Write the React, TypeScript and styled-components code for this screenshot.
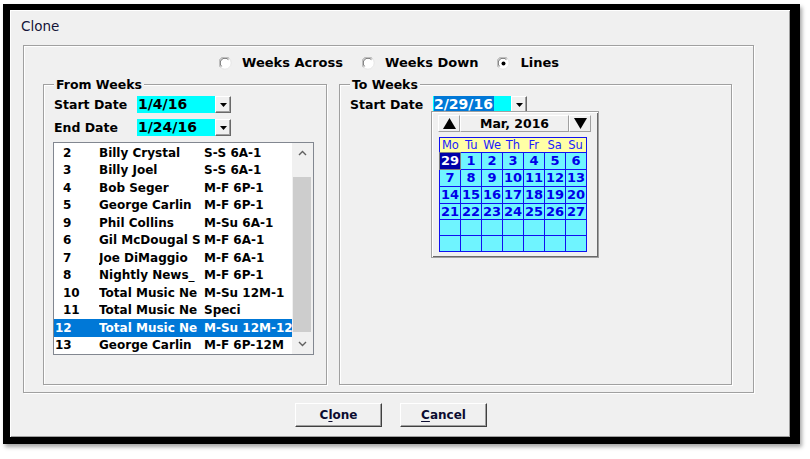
import React from "react";
import styled, { createGlobalStyle } from "styled-components";

const GlobalStyle = createGlobalStyle`
  html, body {
    margin: 0;
    padding: 0;
    background: #ffffff;
  }
  body {
    font-family: "DejaVu Sans", "Noto Sans", sans-serif;
    color: #000;
  }
  * {
    box-sizing: border-box;
  }
`;

interface ListItem {
  n: string;
  name: string;
  sched: string;
  selected?: boolean;
  flush?: boolean;
}

const items: ListItem[] = [
  { n: "2", name: "Billy Crystal", sched: "S-S 6A-1" },
  { n: "3", name: "Billy Joel", sched: "S-S 6A-1" },
  { n: "4", name: "Bob Seger", sched: "M-F 6P-1" },
  { n: "5", name: "George Carlin", sched: "M-F 6P-1" },
  { n: "9", name: "Phil Collins", sched: "M-Su 6A-1" },
  { n: "6", name: "Gil McDougal S", sched: "M-F 6A-1" },
  { n: "7", name: "Joe DiMaggio", sched: "M-F 6A-1" },
  { n: "8", name: "Nightly News_", sched: "M-F 6P-1" },
  { n: "10", name: "Total Music Ne", sched: "M-Su 12M-1" },
  { n: "11", name: "Total Music Ne", sched: "Speci" },
  { n: "12", name: "Total Music Ne", sched: "M-Su 12M-12", selected: true, flush: true },
  { n: "13", name: "George Carlin", sched: "M-F 6P-12M", flush: true },
];

const weekDays = ["Mo", "Tu", "We", "Th", "Fr", "Sa", "Su"];
const weeks: string[][] = [
  ["29", "1", "2", "3", "4", "5", "6"],
  ["7", "8", "9", "10", "11", "12", "13"],
  ["14", "15", "16", "17", "18", "19", "20"],
  ["21", "22", "23", "24", "25", "26", "27"],
  ["", "", "", "", "", "", ""],
  ["", "", "", "", "", "", ""],
];

function Radio({ checked }: { checked?: boolean }) {
  return (
    <svg width="13" height="13" viewBox="0 0 13 13">
      <circle cx="6.5" cy="6.5" r="6" fill="#fff" />
      <path d="M1.6 10.4 A6 6 0 0 1 10.4 1.6" stroke="#a0a0a0" strokeWidth="1" fill="none" />
      <path d="M2.6 9.4 A4.6 4.6 0 0 1 9.4 2.6" stroke="#696969" strokeWidth="1" fill="none" />
      <path d="M10.4 1.6 A6 6 0 0 1 1.6 10.4" stroke="#e3e3e3" strokeWidth="1" fill="none" />
      {checked && <circle cx="6.5" cy="6.5" r="2" fill="#000" />}
    </svg>
  );
}

function DownTriangle() {
  return (
    <svg width="7" height="4" viewBox="0 0 7 4">
      <polygon points="0,0 7,0 3.5,4" fill="#000" />
    </svg>
  );
}

function Chevron({ up }: { up?: boolean }) {
  return (
    <svg width="9" height="6" viewBox="0 0 9 6">
      <polyline
        points={up ? "1,5 4.5,1.5 8,5" : "1,1 4.5,4.5 8,1"}
        stroke="#606060"
        strokeWidth="1.4"
        fill="none"
      />
    </svg>
  );
}

function BigTriangle({ up }: { up?: boolean }) {
  return (
    <svg width="13" height="11" viewBox="0 0 13 11">
      <polygon points={up ? "6.5,0 13,11 0,11" : "0,0 13,0 6.5,11"} fill="#000" />
    </svg>
  );
}

function DatePicker({ value, highlight }: { value: string; highlight?: boolean }) {
  return (
    <DateWrap>
      <DateInput>{highlight ? <Highlight>{value}</Highlight> : value}</DateInput>
      <DropButton>
        <DownTriangle />
      </DropButton>
    </DateWrap>
  );
}

export default function App() {
  return (
    <>
      <GlobalStyle />
      <Page>
        <Frame>
          <Title>Clone</Title>
          <OuterGroup>
            <RadioRow>
              <RadioItem>
                <Radio />
                <span>Weeks Across</span>
              </RadioItem>
              <RadioItem>
                <Radio />
                <span>Weeks Down</span>
              </RadioItem>
              <RadioItem>
                <Radio checked />
                <span>Lines</span>
              </RadioItem>
            </RadioRow>
            <Panels>
              <GroupBox width={284}>
                <Legend>From Weeks</Legend>
                <FieldRow>
                  <FieldLabel>Start Date</FieldLabel>
                  <DatePicker value="1/4/16" />
                </FieldRow>
                <FieldRow>
                  <FieldLabel>End Date</FieldLabel>
                  <DatePicker value="1/24/16" />
                </FieldRow>
                <ListBox>
                  <ListRows>
                    {items.map((it) => (
                      <ListRow key={it.n} selected={it.selected}>
                        <NumCell flush={it.flush}>{it.n}</NumCell>
                        <TextCell>{it.name}</TextCell>
                        <TextCell>{it.sched}</TextCell>
                      </ListRow>
                    ))}
                  </ListRows>
                  <ScrollBar>
                    <ScrollArrow>
                      <Chevron up />
                    </ScrollArrow>
                    <ScrollTrack>
                      <ScrollThumb />
                    </ScrollTrack>
                    <ScrollArrow>
                      <Chevron />
                    </ScrollArrow>
                  </ScrollBar>
                </ListBox>
              </GroupBox>
              <GroupBox width={393}>
                <Legend>To Weeks</Legend>
                <FieldRow>
                  <FieldLabel>Start Date</FieldLabel>
                  <PickerAnchor>
                    <DatePicker value="2/29/16" highlight />
                    <CalendarPopup>
                      <CalHeader>
                        <NavButton>
                          <BigTriangle up />
                        </NavButton>
                        <MonthLabel>Mar, 2016</MonthLabel>
                        <NavButton>
                          <BigTriangle />
                        </NavButton>
                      </CalHeader>
                      <CalGrid>
                        <HeadRow>
                          {weekDays.map((d) => (
                            <DayHead key={d}>{d}</DayHead>
                          ))}
                        </HeadRow>
                        {weeks.flatMap((w, wi) =>
                          w.map((d, di) => (
                            <DayCell key={`${wi}-${di}`} selected={wi === 0 && di === 0}>
                              {d}
                            </DayCell>
                          ))
                        )}
                      </CalGrid>
                    </CalendarPopup>
                  </PickerAnchor>
                </FieldRow>
              </GroupBox>
            </Panels>
          </OuterGroup>
          <ButtonRow>
            <PushButton>
              C<u>l</u>one
            </PushButton>
            <PushButton>
              <u>C</u>ancel
            </PushButton>
          </ButtonRow>
        </Frame>
      </Page>
    </>
  );
}

const Page = styled.div`
  width: 810px;
  height: 459px;
  padding: 4px 0 0 3px;
  background: #fff;
`;

const Frame = styled.div`
  width: 797px;
  height: 440px;
  border-style: solid;
  border-color: #000;
  border-width: 6px 10px 7px 7px;
  background: #f0f0f0;
  box-shadow: 2px 3px 4px rgba(0, 0, 0, 0.35), inset 1px 1px 0 #fff,
    inset -1px -1px 0 #a0a0a0;
  padding: 8px 0 0 11px;
`;

const Title = styled.div`
  font-size: 13.5px;
  line-height: 16px;
  color: #141438;
  height: 16px;
`;

const etched = `
  border: 1px solid #a0a0a0;
  box-shadow: inset 1px 1px 0 #fff, 1px 1px 0 #fff;
`;

const OuterGroup = styled.div`
  ${etched};
  margin: 11px 0 0 2px;
  width: 731px;
  height: 348px;
  padding: 9px 21px 0 19px;
`;

const RadioRow = styled.div`
  display: flex;
  justify-content: center;
  gap: 19px;
  height: 16px;
  padding-left: 3px;
`;

const RadioItem = styled.div`
  display: flex;
  align-items: center;
  gap: 10px;
  font-size: 13px;
  font-weight: bold;
  line-height: 16px;
`;

const Panels = styled.div`
  display: flex;
  gap: 12px;
  margin-top: 13px;
`;

const GroupBox = styled.div<{ width: number }>`
  ${etched};
  position: relative;
  width: ${(p) => p.width}px;
  height: 301px;
  padding: 11px 0 0 9px;
  display: flex;
  flex-direction: column;
  gap: 6px;
`;

const Legend = styled.div`
  position: absolute;
  top: -8px;
  left: 10px;
  padding: 0 2px;
  background: #f0f0f0;
  font-size: 12.5px;
  font-weight: bold;
  line-height: 15px;
`;

const FieldRow = styled.div`
  display: flex;
  align-items: center;
  height: 17px;
`;

const FieldLabel = styled.div`
  width: 84px;
  font-size: 12.5px;
  font-weight: bold;
  padding-left: 1px;
`;

const PickerAnchor = styled.div`
  position: relative;
`;

const DateWrap = styled.div`
  display: flex;
  height: 17px;
`;

const DateInput = styled.div`
  width: 78px;
  height: 17px;
  background: #00ffff;
  font-size: 14px;
  font-weight: bold;
  line-height: 17px;
  padding-left: 1px;
  white-space: nowrap;
`;

const Highlight = styled.span`
  display: inline-block;
  background: #0078d7;
  color: #fff;
  padding-right: 1px;
`;

const DropButton = styled.div`
  width: 16px;
  height: 17px;
  display: flex;
  align-items: center;
  justify-content: center;
  background: #f0f0f0;
  border-style: solid;
  border-width: 1px;
  border-color: #fff #696969 #696969 #fff;
  box-shadow: inset -1px -1px 0 #a0a0a0;
`;

const ListBox = styled.div`
  display: flex;
  width: 261px;
  height: 213px;
  border: 1px solid #828790;
  background: #fff;
`;

const ListRows = styled.div`
  flex: 1;
  padding-top: 1px;
  overflow: hidden;
`;

const ListRow = styled.div<{ selected?: boolean }>`
  display: grid;
  grid-template-columns: 45px 105px 1fr;
  height: 17.5px;
  align-items: center;
  font-size: 12px;
  font-weight: bold;
  background: ${(p) => (p.selected ? "#0078d7" : "transparent")};
  color: ${(p) => (p.selected ? "#fff" : "#000")};
`;

const NumCell = styled.div<{ flush?: boolean }>`
  padding-left: ${(p) => (p.flush ? 1 : 9)}px;
  white-space: nowrap;
`;

const TextCell = styled.div`
  white-space: nowrap;
  overflow: hidden;
`;

const ScrollBar = styled.div`
  width: 21px;
  display: flex;
  flex-direction: column;
  background: #f0f0f0;
  padding: 0 2px 0 1px;
`;

const ScrollArrow = styled.div`
  height: 20px;
  display: flex;
  align-items: center;
  justify-content: center;
  flex-shrink: 0;
`;

const ScrollTrack = styled.div`
  flex: 1;
  padding: 14px 0 2px;
  display: flex;
`;

const ScrollThumb = styled.div`
  flex: 1;
  background: #cdcdcd;
`;

const CalendarPopup = styled.div`
  position: absolute;
  left: -2px;
  top: 15px;
  width: 168px;
  height: 147px;
  background: #f0f0f0;
  border: 1px solid #a0a0a0;
  box-shadow: inset 1px 1px 0 #fff, inset -1px -1px 0 #696969;
  padding: 3px 0 0 6px;
  z-index: 2;
`;

const CalHeader = styled.div`
  display: flex;
  width: 153px;
  height: 17px;
`;

const NavButton = styled.div`
  width: 22px;
  height: 17px;
  display: flex;
  align-items: center;
  justify-content: center;
  background: #f0f0f0;
  border-style: solid;
  border-width: 1px;
  border-color: #fff #a0a0a0 #a0a0a0 #fff;
`;

const MonthLabel = styled.div`
  flex: 1;
  text-align: center;
  font-size: 12.5px;
  font-weight: bold;
  line-height: 15px;
  border-style: solid;
  border-width: 1px;
  border-color: #fff #a0a0a0 #a0a0a0 #fff;
`;

const CalGrid = styled.div`
  margin: 5px 0 0 1px;
  display: grid;
  grid-template-columns: repeat(7, 20px);
  grid-template-rows: 14px 16px 16px 16px 15px 15px 15px;
  gap: 1px;
  padding: 1px;
  width: 148px;
  background: #1010f0;
`;

const HeadRow = styled.div`
  grid-column: 1 / -1;
  display: grid;
  grid-template-columns: repeat(7, 1fr);
  background: #ffffa6;
`;

const DayHead = styled.div`
  color: #1a1aff;
  font-size: 11.5px;
  line-height: 14px;
  text-align: center;
  white-space: nowrap;
`;

const DayCell = styled.div<{ selected?: boolean }>`
  background: ${(p) => (p.selected ? "#0000a8" : "#6ff4ff")};
  color: ${(p) => (p.selected ? "#fff" : "#0000e8")};
  box-shadow: ${(p) => (p.selected ? "0 0 0 1px #808080" : "none")};
  font-size: 13px;
  font-weight: bold;
  line-height: 16px;
  text-align: center;
`;

const ButtonRow = styled.div`
  display: flex;
  gap: 18px;
  margin-top: 10px;
  padding-left: 274px;
`;

const PushButton = styled.div`
  width: 87px;
  height: 24px;
  display: flex;
  align-items: center;
  justify-content: center;
  background: #f0f0f0;
  font-size: 12px;
  font-weight: bold;
  color: #0c0c30;
  border-style: solid;
  border-width: 1px;
  border-color: #fff #404040 #404040 #fff;
  box-shadow: inset -1px -1px 0 #a0a0a0;

  u {
    text-decoration-thickness: 1px;
    text-underline-offset: 2px;
  }
`;
